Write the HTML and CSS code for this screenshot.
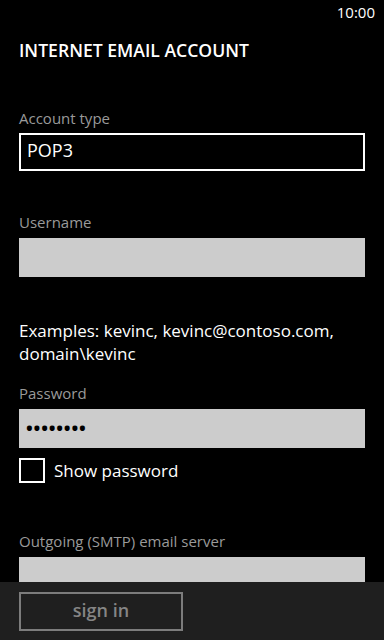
FILE: index.html
```html
<!DOCTYPE html>
<html>
  <head>
    <title>Internet email account</title>
    <link rel="stylesheet" href="styles.css">
  </head>
  <body>
    <div class="status">10:00</div>

    <div class="page">
      <h1 class="title">INTERNET EMAIL ACCOUNT</h1>

      <div class="label first">Account type</div>
      <div class="box box-dark">POP3</div>

      <div class="label">Username</div>
      <div class="box"></div>

      <p class="hint">Examples: kevinc, kevinc@contoso.com, domain\kevinc</p>

      <div class="label tight">Password</div>
      <div class="box dots">&#8226;&#8226;&#8226;&#8226;&#8226;&#8226;&#8226;&#8226;</div>

      <div class="check-row">
        <span class="check"></span>
        <span class="check-text">Show password</span>
      </div>

      <div class="label far">Outgoing (SMTP) email server</div>
      <div class="box"></div>
    </div>

    <div class="appbar">
      <a class="btn">sign in</a>
    </div>
  </body>
</html>
```

FILE: styles.css
```css
html,
body {
  margin: 0;
  padding: 0;
  background: #000;
}
body {
  width: 384px;
  height: 640px;
  overflow: hidden;
  color: #fff;
  font-family: "Open Sans", "Noto Sans", sans-serif;
}
.status {
  padding: 2px 9px 0 0;
  height: 20px;
  line-height: 20px;
  font-size: 15px;
  text-align: right;
}
.page {
  padding: 0 19px;
}
.title {
  margin: 16px 0 0;
  font-size: 17.6px;
  line-height: 24px;
  font-weight: 600;
}
.label {
  margin-top: 41px;
  font-size: 15px;
  line-height: 20px;
  color: #9a9a9a;
}
.label.first {
  margin-top: 46px;
}
.label.tight {
  margin-top: 18px;
}
.label.far {
  margin-top: 48px;
}
.box {
  margin-top: 6px;
  height: 39px;
  background: #cccccc;
  box-sizing: border-box;
}
.box-dark {
  margin-top: 5px;
  height: 38px;
  background: #000;
  border: 2px solid #fff;
  padding: 0 6px 4px;
  font-size: 18px;
  line-height: 30px;
}
.dots {
  padding-left: 7px;
  color: #000;
  font-size: 18px;
  font-weight: 700;
  line-height: 39px;
  letter-spacing: 0.8px;
}
.hint {
  margin: 42px 0 0;
  font-size: 17px;
  line-height: 23px;
}
.check-row {
  display: flex;
  align-items: center;
  margin-top: 10px;
  height: 25px;
}
.check {
  width: 26px;
  height: 25px;
  box-sizing: border-box;
  border: 2px solid #fff;
}
.check-text {
  margin-left: 9px;
  font-size: 17px;
  line-height: 25px;
}
.appbar {
  position: fixed;
  left: 0;
  right: 0;
  bottom: 0;
  height: 58px;
  background: #1f1f1f;
  padding: 10px 19px 0;
  box-sizing: border-box;
}
.btn {
  display: block;
  width: 164px;
  height: 39px;
  box-sizing: border-box;
  border: 2px solid #7c7c7c;
  color: #858585;
  text-align: center;
  font-size: 18px;
  line-height: 33px;
  font-weight: 600;
}
```
